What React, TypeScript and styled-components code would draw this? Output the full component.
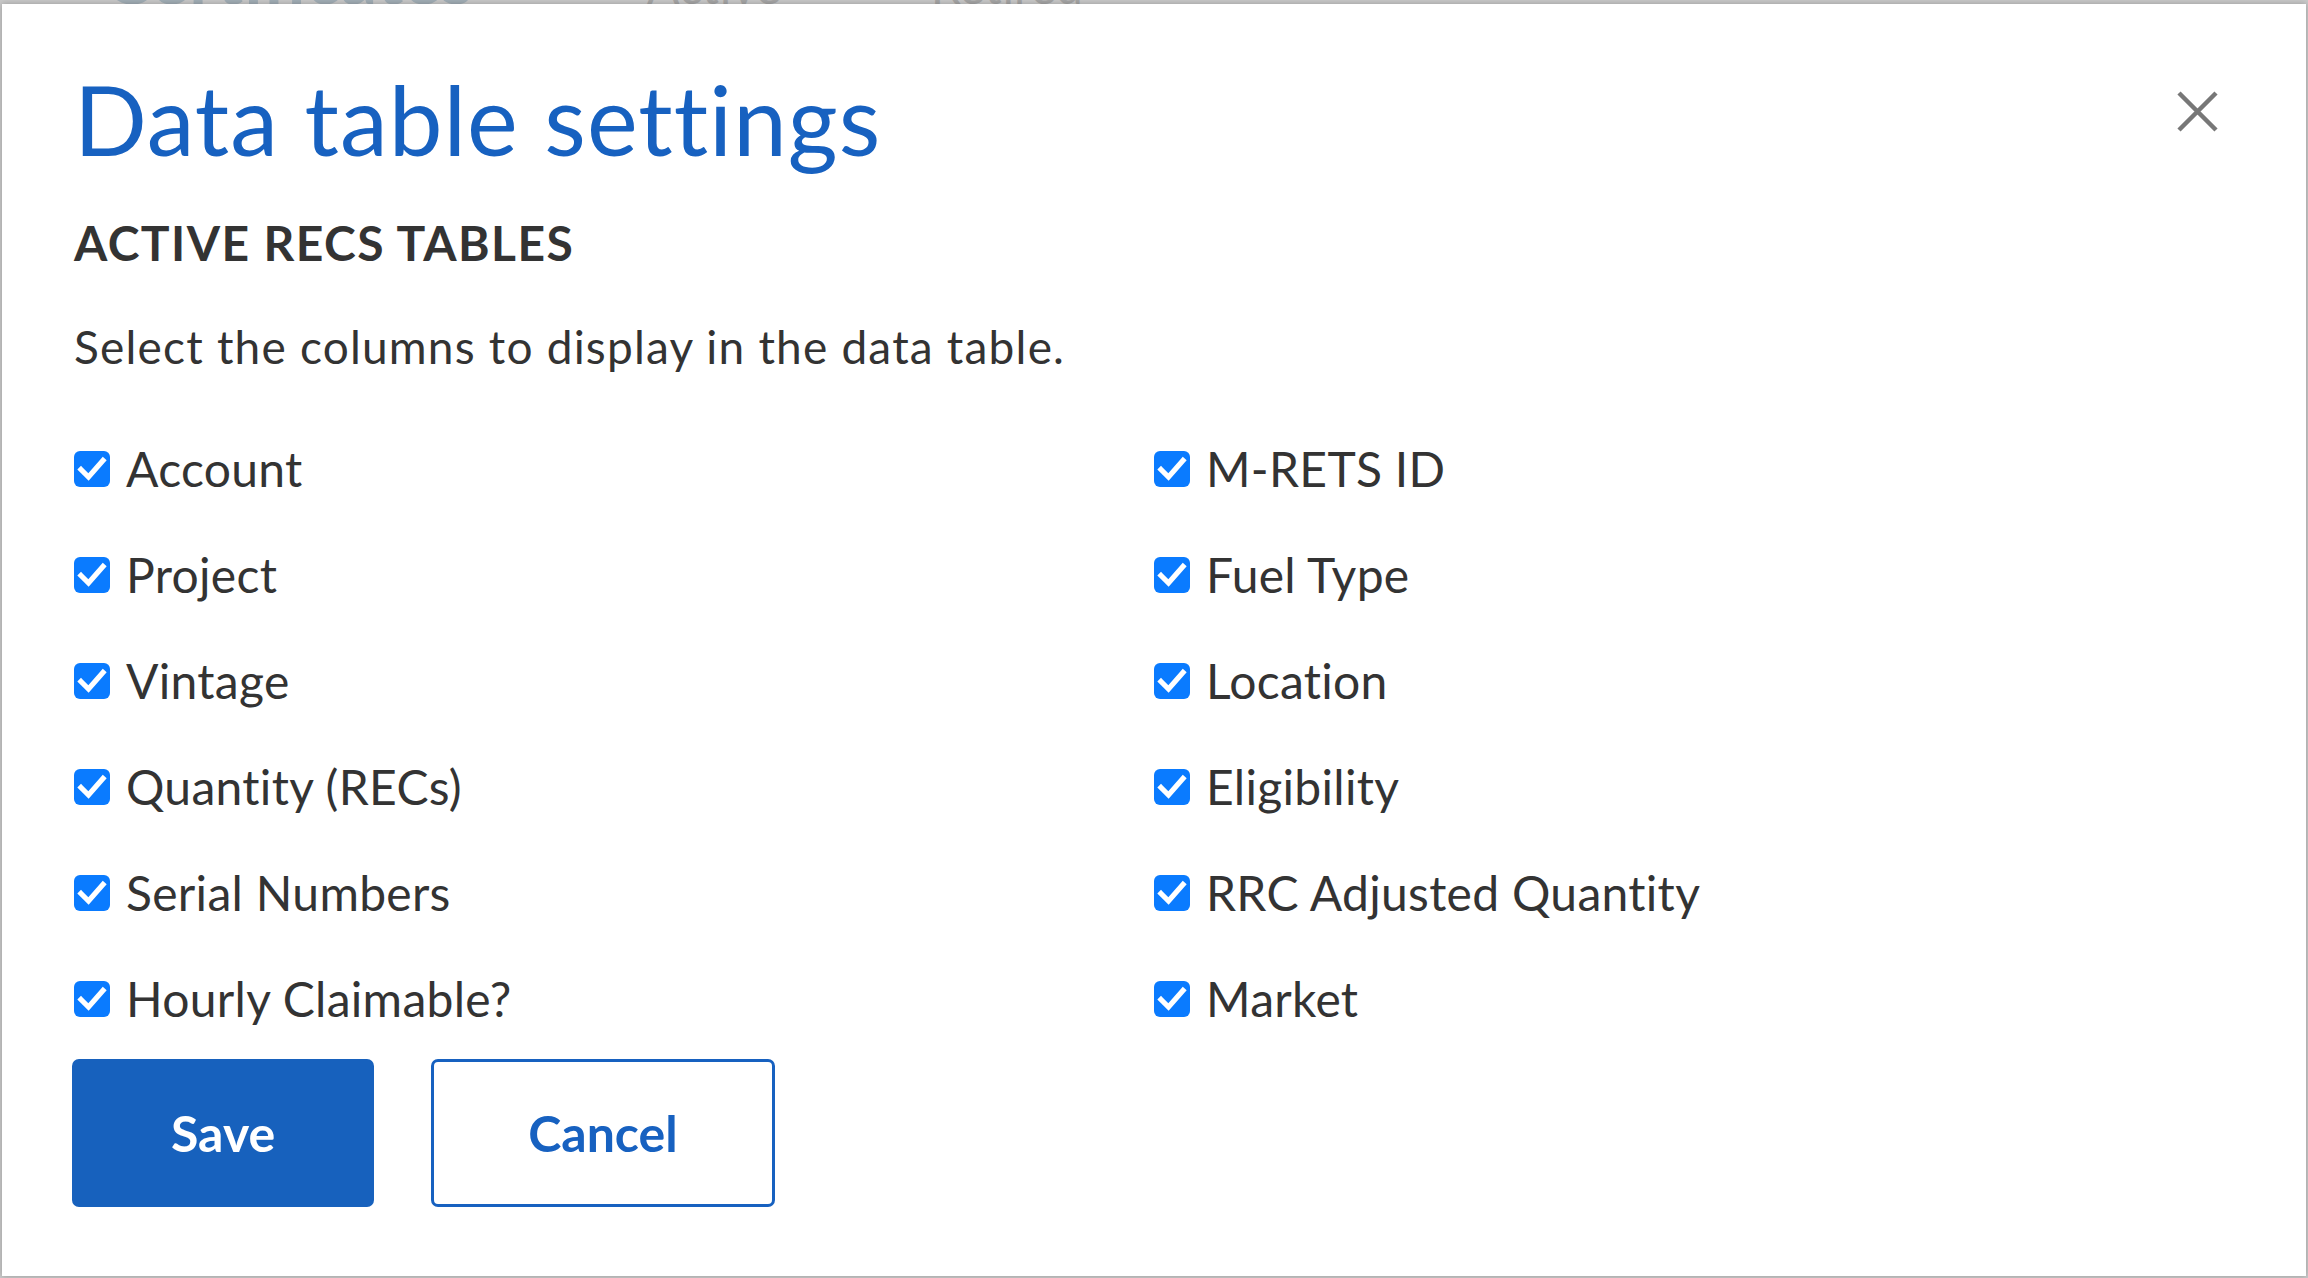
import React from "react";
import styled, { createGlobalStyle } from "styled-components";

const GlobalStyle = createGlobalStyle`
  html, body {
    margin: 0;
    padding: 0;
  }
  body {
    background: #c6c6c6;
    font-family: Lato, "Open Sans", sans-serif;
    overflow: hidden;
  }
`;

const Page = styled.div`
  position: relative;
  width: 2308px;
  height: 1278px;
  overflow: hidden;
  background: #c9c9c9;
`;

const PageTabs = styled.div`
  display: flex;
  align-items: baseline;
  margin-top: -60px;
  height: 64px;
`;

const PageTab = styled.span<{ $ml: number; $big?: boolean }>`
  margin-left: ${(p) => p.$ml}px;
  font-size: ${(p) => (p.$big ? 72 : 48)}px;
  font-weight: ${(p) => (p.$big ? 700 : 400)};
  line-height: 1;
  color: ${(p) => (p.$big ? "#a2aeb6" : "#a6a6a6")};
`;

const Modal = styled.div`
  position: absolute;
  top: 4px;
  left: 2px;
  right: 2px;
  bottom: 2px;
  background: #ffffff;
  box-shadow: 0 0 6px rgba(0, 0, 0, 0.25);
  padding: 67px 72px 0 72px;
  box-sizing: border-box;
  display: flex;
  flex-direction: column;
`;

const Header = styled.div`
  display: flex;
  justify-content: space-between;
  align-items: flex-start;
`;

const Title = styled.h1`
  margin: 0;
  font-size: 96px;
  font-weight: 400;
  line-height: 1;
  color: #1761c0;
  letter-spacing: 1px;
`;

const CloseButton = styled.button`
  margin: 20px 16px 0 0;
  padding: 0;
  border: 0;
  background: none;
  width: 41px;
  height: 41px;
  cursor: pointer;
  display: flex;
`;

const SectionTitle = styled.h2`
  margin: 52px 0 0 0;
  font-size: 48px;
  font-weight: 700;
  line-height: 1;
  letter-spacing: 1.4px;
  color: #333333;
  text-transform: uppercase;
`;

const Hint = styled.p`
  margin: 57px 0 0 0;
  font-size: 46px;
  line-height: 1;
  letter-spacing: 1.2px;
  color: #333333;
`;

const Columns = styled.div`
  margin-top: 46px;
  display: grid;
  grid-template-columns: 1080px 1fr;
  grid-template-rows: repeat(6, 106px);
  grid-auto-flow: column;
`;

const Option = styled.label`
  display: flex;
  align-items: center;
  gap: 16px;
  font-size: 48px;
  line-height: 1;
  letter-spacing: 0.3px;
  color: #333333;
  cursor: pointer;
`;

const Box = styled.span<{ $checked: boolean }>`
  width: 36px;
  height: 36px;
  border-radius: 6px;
  background: ${(p) => (p.$checked ? "#0a7bff" : "#ffffff")};
  border: ${(p) => (p.$checked ? "none" : "2px solid #adb5bd")};
  display: flex;
  align-items: center;
  justify-content: center;
  flex-shrink: 0;
`;

const Actions = styled.div`
  margin: 7px 0 0 -2px;
  display: flex;
  gap: 57px;
`;

const Button = styled.button<{ $primary?: boolean }>`
  height: 148px;
  padding: 0 ${(p) => (p.$primary ? 99 : 94)}px;
  border-radius: 7px;
  border: ${(p) => (p.$primary ? "none" : "3px solid #1761c0")};
  background: ${(p) => (p.$primary ? "#1761bd" : "#ffffff")};
  color: ${(p) => (p.$primary ? "#ffffff" : "#1761c0")};
  font-family: Lato, "Open Sans", sans-serif;
  font-size: 50px;
  font-weight: 700;
  cursor: pointer;
`;

const leftOptions = [
  "Account",
  "Project",
  "Vintage",
  "Quantity (RECs)",
  "Serial Numbers",
  "Hourly Claimable?",
];

const rightOptions = [
  "M-RETS ID",
  "Fuel Type",
  "Location",
  "Eligibility",
  "RRC Adjusted Quantity",
  "Market",
];

const Check = ({ checked }: { checked: boolean }) => (
  <Box $checked={checked}>
    {checked && (
      <svg width="36" height="36" viewBox="0 0 36 36">
        <path
          d="M7 18.5 L14.5 26 L29 9.5"
          fill="none"
          stroke="#ffffff"
          strokeWidth="5.2"
          strokeLinecap="square"
        />
      </svg>
    )}
  </Box>
);

const App = () => {
  const [checked, setChecked] = React.useState<Record<string, boolean>>(
    Object.fromEntries(
      [...leftOptions, ...rightOptions].map((o) => [o, true])
    )
  );

  return (
    <Page>
      <GlobalStyle />
      <PageTabs>
        <PageTab $ml={104} $big>
          Certificates
        </PageTab>
        <PageTab $ml={174}>Active</PageTab>
        <PageTab $ml={150}>Retired</PageTab>
      </PageTabs>
      <Modal>
        <Header>
          <Title>Data table settings</Title>
          <CloseButton aria-label="Close">
            <svg width="41" height="41" viewBox="0 0 41 41">
              <path
                d="M2 2 L39 39 M39 2 L2 39"
                stroke="#777777"
                strokeWidth="4.5"
              />
            </svg>
          </CloseButton>
        </Header>
        <SectionTitle>Active RECs tables</SectionTitle>
        <Hint>Select the columns to display in the data table.</Hint>
        <Columns>
          {[...leftOptions, ...rightOptions].map((o) => (
            <Option
              key={o}
              onClick={() => setChecked((c) => ({ ...c, [o]: !c[o] }))}
            >
              <Check checked={checked[o]} />
              {o}
            </Option>
          ))}
        </Columns>
        <Actions>
          <Button $primary>Save</Button>
          <Button>Cancel</Button>
        </Actions>
      </Modal>
    </Page>
  );
};

export default App;
